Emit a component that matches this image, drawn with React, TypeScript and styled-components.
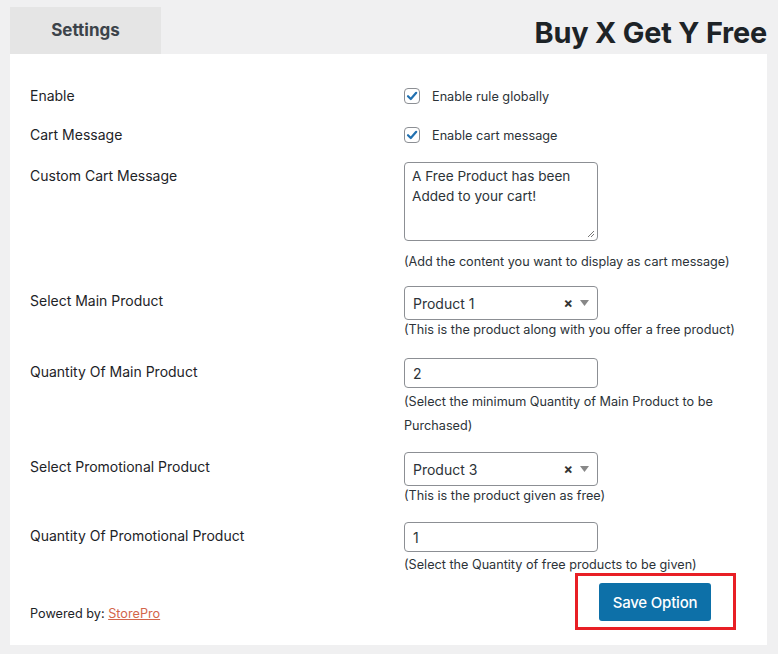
import React from "react";
import styled, { createGlobalStyle } from "styled-components";

const Global = createGlobalStyle`
  html, body { margin: 0; padding: 0; background: #f0f0f1; }
  body { font-family: Inter, "Noto Sans", sans-serif; color: #1d2327; }
  * { box-sizing: border-box; }
`;

const Page = styled.div`
  padding: 7px 11px 0 10px;
  width: 778px;
`;

const Header = styled.div`
  display: flex;
  justify-content: space-between;
  align-items: flex-end;
`;

const Tab = styled.div`
  width: 151px;
  height: 47px;
  background: #e5e5e5;
  display: flex;
  align-items: center;
  justify-content: center;
  font-size: 17px;
  font-weight: 700;
  color: #3c434a;
  padding-bottom: 1px;
`;

const Title = styled.h1`
  margin: 0 0 3px;
  font-size: 28.9px;
  font-weight: 700;
  line-height: 36px;
  color: #1d2327;
  letter-spacing: -0.2px;
`;

const Panel = styled.div`
  background: #fff;
  padding: 30px 20px 15px 20px;
`;

const Row = styled.div<{ $mb?: number }>`
  display: grid;
  grid-template-columns: 374px 1fr;
  margin-bottom: ${(p) => p.$mb ?? 15}px;
`;

const Label = styled.div<{ $pt: number }>`
  font-size: 14px;
  line-height: 24px;
  padding-top: ${(p) => p.$pt}px;
  color: #1d2327;
`;

const Control = styled.div`
  display: flex;
  flex-direction: column;
  align-items: flex-start;
`;

const CheckLine = styled.label`
  display: flex;
  align-items: center;
  gap: 12px;
  height: 24px;
  font-size: 12.7px;
  color: #2c3338;
`;

const Box = styled.span`
  width: 16px;
  height: 16px;
  border: 1px solid #8c8f94;
  border-radius: 4px;
  display: flex;
  align-items: center;
  justify-content: center;
  background: #fff;
`;

const TextArea = styled.div`
  width: 194px;
  height: 79px;
  border: 1px solid #8c8f94;
  border-radius: 4px;
  padding: 3px 7px;
  font-size: 13.6px;
  line-height: 20px;
  color: #2c3338;
  position: relative;
`;

const Grip = styled.svg`
  position: absolute;
  right: 2px;
  bottom: 2px;
`;

const Hint = styled.div<{ $mt: number }>`
  font-size: 12.65px;
  line-height: 24px;
  margin-top: ${(p) => p.$mt}px;
  color: #2c3338;
`;

const SelectBox = styled.div`
  width: 194px;
  height: 34px;
  border: 1px solid #8c8f94;
  border-radius: 4px;
  display: flex;
  align-items: center;
  padding: 0 8px 0 8px;
  font-size: 14px;
  color: #2c3338;
`;

const SelectText = styled.span`
  flex: 1;
`;

const Clear = styled.span`
  font-size: 14px;
  font-weight: 700;
  margin-right: 7px;
  color: #333;
  line-height: 1;
`;

const Input = styled.div`
  width: 194px;
  height: 30px;
  border: 1px solid #8c8f94;
  border-radius: 4px;
  padding: 0 8px;
  display: flex;
  align-items: center;
  font-size: 14px;
  color: #2c3338;
`;

const Footer = styled.div`
  display: flex;
  justify-content: space-between;
  align-items: flex-end;
  padding-right: 11px;
  margin-top: -19px;
`;

const Powered = styled.div`
  font-size: 12.7px;
  line-height: 20px;
  padding-bottom: 6px;
  color: #1d2327;
`;

const Link = styled.a`
  color: #d3654b;
  text-decoration: underline;
`;

const Highlight = styled.div`
  border: 3px solid #e81f25;
  padding: 7px 22px 6px 21px;
`;

const SaveButton = styled.button`
  width: 112px;
  height: 38px;
  background: #0d70a8;
  color: #fff;
  border: none;
  border-radius: 3px;
  font-family: Inter, sans-serif;
  font-size: 15px;
  font-weight: 500;
  letter-spacing: -0.2px;
`;

const Check = () => (
  <Box>
    <svg width="14" height="14" viewBox="0 0 14 14">
      <path d="M3 7.2 L5.8 10 L11.2 3.8" fill="none" stroke="#2271b1" strokeWidth="2.2" strokeLinecap="round" strokeLinejoin="round" />
    </svg>
  </Box>
);

const Arrow = () => (
  <svg width="9" height="6" viewBox="0 0 9 6">
    <path d="M0 0 H9 L4.5 6 Z" fill="#888" />
  </svg>
);

const Select: React.FC<{ value: string }> = ({ value }) => (
  <SelectBox>
    <SelectText>{value}</SelectText>
    <Clear>×</Clear>
    <Arrow />
  </SelectBox>
);

export default function App() {
  return (
    <Page>
      <Global />
      <Header>
        <Tab>Settings</Tab>
        <Title>Buy X Get Y Free</Title>
      </Header>
      <Panel>
        <Row>
          <Label $pt={0}>Enable</Label>
          <Control>
            <CheckLine><Check />Enable rule globally</CheckLine>
          </Control>
        </Row>
        <Row>
          <Label $pt={0}>Cart Message</Label>
          <Control>
            <CheckLine><Check />Enable cart message</CheckLine>
          </Control>
        </Row>
        <Row $mb={12}>
          <Label $pt={2}>Custom Cart Message</Label>
          <Control>
            <TextArea>
              A Free Product has been Added to your cart!
              <Grip width="8" height="8" viewBox="0 0 8 8">
                <path d="M7 1 L1 7 M7 4 L4 7" stroke="#777" strokeWidth="1" />
              </Grip>
            </TextArea>
            <Hint $mt={9}>(Add the content you want to display as cart message)</Hint>
          </Control>
        </Row>
        <Row $mb={16}>
          <Label $pt={3}>Select Main Product</Label>
          <Control>
            <Select value="Product 1" />
            <Hint $mt={-2}>(This is the product along with you offer a free product)</Hint>
          </Control>
        </Row>
        <Row $mb={14}>
          <Label $pt={2}>Quantity Of Main Product</Label>
          <Control>
            <Input>2</Input>
            <Hint $mt={2}>(Select the minimum Quantity of Main Product to be Purchased)</Hint>
          </Control>
        </Row>
        <Row $mb={14}>
          <Label $pt={3}>Select Promotional Product</Label>
          <Control>
            <Select value="Product 3" />
            <Hint $mt={-2}>(This is the product given as free)</Hint>
          </Control>
        </Row>
        <Row>
          <Label $pt={2}>Quantity Of Promotional Product</Label>
          <Control>
            <Input>1</Input>
            <Hint $mt={1}>(Select the Quantity of free products to be given)</Hint>
          </Control>
        </Row>
        <Footer>
          <Powered>Powered by: <Link href="#">StorePro</Link></Powered>
          <Highlight>
            <SaveButton>Save Option</SaveButton>
          </Highlight>
        </Footer>
      </Panel>
    </Page>
  );
}
